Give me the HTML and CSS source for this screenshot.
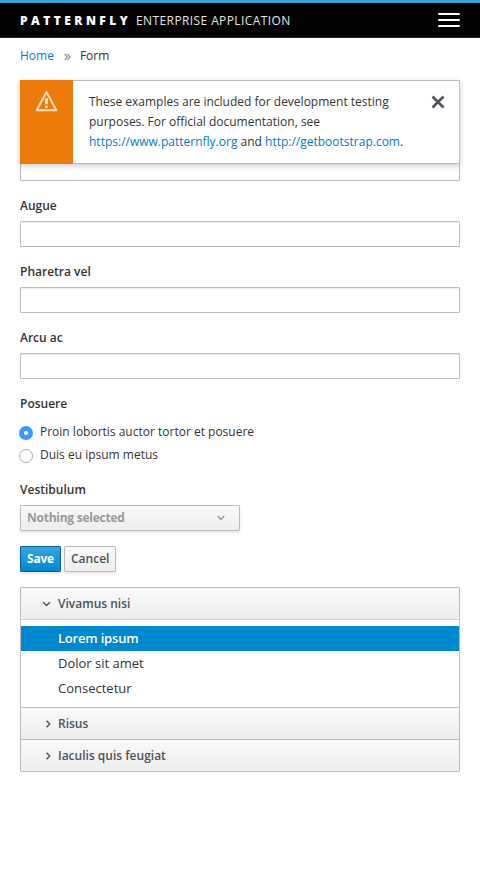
FILE: index.html
```html
<!DOCTYPE html>
<html lang="en">
<head>
<meta charset="utf-8">
<title>Form</title>
<link rel="stylesheet" href="styles.css">
</head>
<body>
<header class="navbar">
  <div class="brand"><span class="brand-name">PATTERNFLY</span><span class="brand-product">ENTERPRISE APPLICATION</span></div>
  <button class="menu-toggle" aria-label="Menu"><span class="bar"></span><span class="bar"></span><span class="bar"></span></button>
</header>
<main class="container">
  <nav class="breadcrumb">
    <a class="crumb-home" href="#">Home</a>
    <svg class="crumb-sep" width="7" height="8" viewBox="0 0 7 8"><path d="M.7.9 3.2 4 .7 7.1M3.5.9 6 4 3.5 7.1"/></svg>
    <span class="crumb-current">Form</span>
  </nav>
  <div class="toast">
    <div class="toast-icon">
      <svg width="23" height="22" viewBox="0 0 23 22"><path class="tri" d="M11.5 2 21.3 20.3H1.7Z"/><path class="mark" d="M10 8.3h3v6h-3zM10 15.7h3v2.2h-3z"/></svg>
    </div>
    <div class="toast-text">These examples are included for development testing purposes. For official documentation, see <a href="#">https://www.patternfly.org</a> and <a href="#">http://getbootstrap.com</a>.</div>
    <button class="toast-close" aria-label="Close"><svg width="14" height="14" viewBox="0 0 14 14"><path d="m1.5 1.5 11 11M12.5 1.5l-11 11"/></svg></button>
  </div>
  <form class="form">
    <div class="group"><input class="input" type="text"></div>
    <div class="group"><label class="label" for="f1">Augue</label><input class="input" id="f1" type="text"></div>
    <div class="group"><label class="label" for="f2">Pharetra vel</label><input class="input" id="f2" type="text"></div>
    <div class="group"><label class="label" for="f3">Arcu ac</label><input class="input" id="f3" type="text"></div>
    <div class="group radios">
      <span class="label">Posuere</span>
      <label class="option"><input class="radio" type="radio" name="r" checked><span>Proin lobortis auctor tortor et posuere</span></label>
      <label class="option"><input class="radio" type="radio" name="r"><span>Duis eu ipsum metus</span></label>
    </div>
    <div class="group">
      <span class="label">Vestibulum</span>
      <button class="btn select" type="button"><span>Nothing selected</span><svg width="8" height="6" viewBox="0 0 8 6"><path d="m.8 1 3.2 3.4L7.2 1"/></svg></button>
    </div>
    <div class="actions"><button class="btn primary" type="button">Save</button><button class="btn" type="button">Cancel</button></div>
  </form>
  <section class="accordion">
    <h4 class="heading open"><svg class="arrow" width="10" height="10" viewBox="0 0 10 10"><path d="M1.2 3.2 4.5 6.5l3.3-3.3"/></svg>Vivamus nisi</h4>
    <ul class="items"><li class="item active">Lorem ipsum</li><li class="item">Dolor sit amet</li><li class="item">Consectetur</li></ul>
    <h4 class="heading"><svg class="arrow" width="10" height="10" viewBox="0 0 10 10"><path d="M4.5 1.7 7.8 5 4.5 8.3"/></svg>Risus</h4>
    <h4 class="heading"><svg class="arrow" width="10" height="10" viewBox="0 0 10 10"><path d="M4.5 1.7 7.8 5 4.5 8.3"/></svg>Iaculis quis feugiat</h4>
  </section>
</main>
</body>
</html>
```
FILE: styles.css
```css
* { box-sizing: border-box; }
body { margin: 0; background: #fff; color: #333; font: 12px/20px "Open Sans", sans-serif; }
a { color: #007bc7; text-decoration: none; }
button { font: inherit; }
svg { fill: none; stroke: currentColor; display: block; flex: none; }
.navbar { height: 38px; background: #030303; border-top: 3px solid #39a5dc; border-bottom: 1px solid #292929; padding: 0 20px; display: flex; justify-content: space-between; align-items: center; }
.brand { display: flex; padding-top: 1px; color: #fff; white-space: nowrap; }
.brand-name { font-weight: 800; width: 116px; letter-spacing: 3.45px; }
.brand-product { color: #e4e4e4; letter-spacing: .4px; }
.menu-toggle { width: 22px; padding: 0; border: 0; background: none; display: grid; gap: 4px; }
.bar { height: 2px; background: #fff; border-radius: 1px; }
.container { position: relative; padding: 8px 20px 0; }
.breadcrumb { display: flex; align-items: center; height: 20px; }
.crumb-sep { margin: 1px 9px 0 10px; color: #9c9c9c; stroke-width: 1.4; }
.toast { position: absolute; z-index: 1; top: 42px; left: 20px; right: 20px; height: 84px; display: flex; align-items: flex-start; background: #fff; border: 1px solid #bbb; box-shadow: 0 2px 6px rgba(3,3,3,.2); }
.toast-icon { width: 53px; height: 84px; margin: -1px 0 0 -1px; padding-top: 10px; background: #ec7a08; display: flex; justify-content: center; }
.tri { stroke: #fcdfc0; stroke-width: 2; stroke-linejoin: round; }
.mark { fill: #fcdfc0; stroke: none; }
.toast-text { width: 340px; padding: 11px 0 0 16px; }
.toast-close { margin: 14px 14px 0 auto; padding: 0; border: 0; background: none; color: #4d5258; stroke-width: 2.6; }
.form { padding-top: 89px; }
.group { margin-bottom: 14px; }
.label { display: block; height: 20px; margin-bottom: 6px; padding-top: 1px; font-weight: 600; }
.input { display: block; width: 100%; height: 26px; padding: 2px 6px; border: 1px solid #bbb; border-radius: 1px; background: #fff; box-shadow: inset 0 1px 1px rgba(3,3,3,.075); font: inherit; }
.radios .label { margin-bottom: 9px; }
.option { display: flex; height: 20px; margin-bottom: 3px; }
.option:last-child { margin-bottom: 0; }
.radio { appearance: none; width: 14px; height: 14px; margin: 4px 7px 0 -1px; border: 1px solid #aaa; border-radius: 50%; background: #fff; }
.radio:checked { border: 0; background: radial-gradient(circle, #fff 1.6px, #3b99fc 2.4px); }
.btn { height: 26px; padding: 0 6px; border: 1px solid #bbb; border-radius: 1px; background: linear-gradient(#fafafa, #ededed); box-shadow: 0 2px 3px rgba(3,3,3,.1); color: #4d5258; font-weight: 600; line-height: 24px; }
.select { width: 220px; display: flex; justify-content: space-between; align-items: center; padding-right: 14px; color: #999; font-weight: 700; letter-spacing: -.25px; stroke-width: 1.5; }
.actions { display: flex; gap: 3px; margin-top: 15px; }
.primary { width: 41px; padding: 0; color: #fff; border-color: #00659c; background: linear-gradient(#39a5dc, #0088ce); font-weight: 700; letter-spacing: -.2px; }
.accordion { margin-top: 15px; border: 1px solid #bbb; border-radius: 1px; box-shadow: 0 1px 1px rgba(3,3,3,.05); }
.heading { display: flex; align-items: center; height: 32px; margin: 0; padding-left: 21px; border-top: 1px solid #bbb; background: linear-gradient(#fafafa, #ededed); color: #4d5258; font-size: 12px; font-weight: 600; }
.open { border-top: 0; border-bottom: 1px solid #d1d1d1; }
.arrow { margin-right: 6px; stroke-width: 1.4; }
.items { list-style: none; margin: 0; padding: 6px 0; height: 87px; font-size: 13px; line-height: 25px; }
.item { padding-left: 37px; }
.active { background: #0088ce; color: #fff; font-weight: 600; letter-spacing: -.2px; }
```
